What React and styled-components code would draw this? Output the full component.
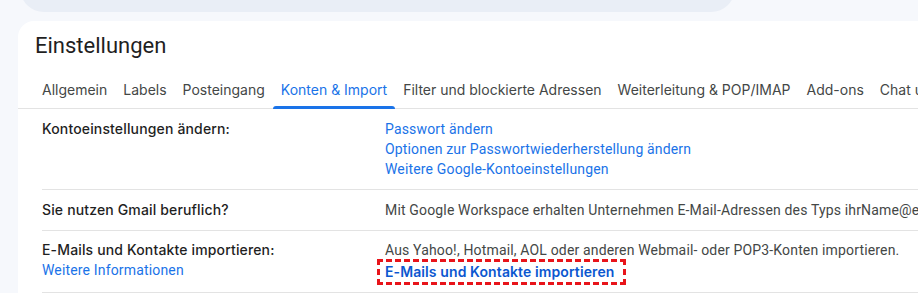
import React from 'react'
import styled, { createGlobalStyle } from 'styled-components'

const GlobalStyle = createGlobalStyle`
  html, body {
    margin: 0;
    padding: 0;
    background: #f6f8fc;
    overflow: hidden;
    font-family: Roboto, "Liberation Sans", Arial, sans-serif;
  }
`

const tabs = [
  'Allgemein',
  'Labels',
  'Posteingang',
  'Konten & Import',
  'Filter und blockierte Adressen',
  'Weiterleitung & POP/IMAP',
  'Add-ons',
  'Chat und Meet',
]

export default function App() {
  return (
    <Page>
      <GlobalStyle />
      <SearchBar />
      <Card>
        <Title>Einstellungen</Title>
        <TabBar>
          {tabs.map((t) => (
            <Tab key={t} active={t === 'Konten & Import'}>{t}</Tab>
          ))}
        </TabBar>
        <Rows>
          <Row>
            <Label>
              <strong>Kontoeinstellungen ändern:</strong>
            </Label>
            <Value>
              <Link href="#">Passwort ändern</Link>
              <Link href="#">Optionen zur Passwortwiederherstellung ändern</Link>
              <Link href="#">Weitere Google-Kontoeinstellungen</Link>
            </Value>
          </Row>
          <Row>
            <Label>
              <strong>Sie nutzen Gmail beruflich?</strong>
            </Label>
            <Value>
              <Text>Mit Google Workspace erhalten Unternehmen E-Mail-Adressen des Typs ihrName@example.com.</Text>
            </Value>
          </Row>
          <Row last>
            <Label>
              <strong>E-Mails und Kontakte importieren:</strong>
              <Link href="#">Weitere Informationen</Link>
            </Label>
            <Value>
              <Text>Aus Yahoo!, Hotmail, AOL oder anderen Webmail- oder POP3-Konten importieren.</Text>
              <Marked>
                <Link href="#" bold>E-Mails und Kontakte importieren</Link>
              </Marked>
            </Value>
          </Row>
        </Rows>
      </Card>
    </Page>
  )
}

const Page = styled.div`
  width: 918px;
  height: 293px;
  overflow: hidden;
`

const SearchBar = styled.div`
  margin: -36px 0 0 20px;
  width: 715px;
  height: 48px;
  border-radius: 24px;
  background: #e9eef6;
`

const Card = styled.div`
  margin: 9px 0 0 18px;
  width: 1100px;
  height: 400px;
  background: #ffffff;
  border-top-left-radius: 16px;
`

const Title = styled.h1`
  margin: 0;
  padding: 11px 0 0 17px;
  font-size: 22px;
  line-height: 28px;
  font-weight: 400;
  color: #1f1f1f;
`

const TabBar = styled.div`
  display: flex;
  margin-top: 12px;
  padding-left: 16px;
  border-bottom: 1px solid #e3e3e3;
  font-family: Inter, Roboto, sans-serif;
`

const Tab = styled.div`
  position: relative;
  padding: 0 8px;
  height: 36px;
  line-height: 36px;
  font-size: 14px;
  white-space: nowrap;
  color: ${(p) => (p.active ? '#1a73e8' : '#444746')};

  &::after {
    content: '';
    display: ${(p) => (p.active ? 'block' : 'none')};
    position: absolute;
    left: 0;
    right: 0;
    bottom: -1px;
    height: 3px;
    border-radius: 3px 3px 0 0;
    background: #1a73e8;
  }
`

const Rows = styled.div`
  margin-left: 24px;
`

const Row = styled.div`
  display: grid;
  grid-template-columns: 343px 1fr;
  padding: ${(p) => (p.last ? '9px 0 7px' : '10px 0')};
  border-bottom: 1px solid #e3e3e3;
  font-size: 14px;
  line-height: 20px;
  letter-spacing: 0.16px;
`

const Label = styled.div`
  display: flex;
  flex-direction: column;
  align-items: flex-start;

  strong {
    font-family: Inter, Roboto, sans-serif;
    font-weight: 500;
    letter-spacing: 0.15px;
    color: #1f1f1f;
  }
`

const Value = styled.div`
  display: flex;
  flex-direction: column;
  align-items: flex-start;
  white-space: nowrap;
`

const Text = styled.span`
  color: #444746;
`

const Link = styled.a`
  color: ${(p) => (p.bold ? '#0b57d0' : '#1a73e8')};
  font-family: ${(p) => (p.bold ? 'Inter, Roboto, sans-serif' : 'inherit')};
  font-weight: ${(p) => (p.bold ? 600 : 400)};
  letter-spacing: ${(p) => (p.bold ? '0.1px' : 'inherit')};
  text-decoration: none;
`

const Marked = styled.span`
  display: inline-block;
  margin: -1px 0 0 -8px;
  padding: 0 9px 0 5px;
  line-height: 19px;
  border: 3px dashed #e8141a;
`
